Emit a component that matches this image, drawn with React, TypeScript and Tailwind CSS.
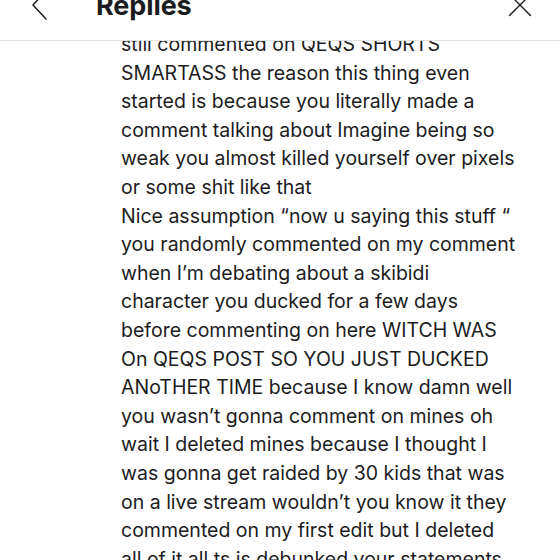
const lines = [
  'still commented on QEQS SHORTS',
  'SMARTASS the reason this thing even',
  'started is because you literally made a',
  'comment talking about Imagine being so',
  'weak you almost killed yourself over pixels',
  'or some shit like that',
  'Nice assumption “now u saying this stuff “',
  'you randomly commented on my comment',
  'when I’m debating about a skibidi',
  'character you ducked for a few days',
  'before commenting on here WITCH WAS',
  'On QEQS POST SO YOU JUST DUCKED',
  'ANoTHER TIME because I know damn well',
  'you wasn’t gonna comment on mines oh',
  'wait I deleted mines because I thought I',
  'was gonna get raided by 30 kids that was',
  'on a live stream wouldn’t you know it they',
  'commented on my first edit but I deleted',
  'all of it all ts is debunked your statements',
];

export default function App() {
  return (
    <div className="w-[560px] h-[560px] bg-white overflow-hidden flex flex-col font-['Inter',sans-serif] text-[#1c1c1e]">
      {/* Header, scrolled partly out of view */}
      <div className="h-[41px] shrink-0 border-b border-[#e3e3e3] overflow-hidden flex items-start">
        <svg width="22" height="24" viewBox="28 0 22 24" className="shrink-0 ml-[28px]">
          <path d="M46 -9 L33 5 L46 19" fill="none" stroke="#1c1c1e" strokeWidth="1.5" strokeLinecap="round" strokeLinejoin="round" />
        </svg>
        <h1 className="ml-[46px] -mt-[8px] text-[27px] font-bold tracking-[-0.1px] leading-none">Replies</h1>
        <svg width="24" height="20" viewBox="508 0 24 20" className="shrink-0 ml-auto mr-[28px]">
          <path d="M509.5 -5.5 L530.5 15.5 M530.5 -5.5 L509.5 15.5" fill="none" stroke="#1c1c1e" strokeWidth="1.4" strokeLinecap="round" />
        </svg>
      </div>

      {/* Reply text */}
      <div className="flex-1 overflow-hidden">
        <div className="-mt-[11px] pl-[121px] text-[19.5px] leading-[28.6px]">
          {lines.map((line, i) => (
            <div key={i} className="whitespace-nowrap">{line}</div>
          ))}
        </div>
      </div>
    </div>
  );
}
